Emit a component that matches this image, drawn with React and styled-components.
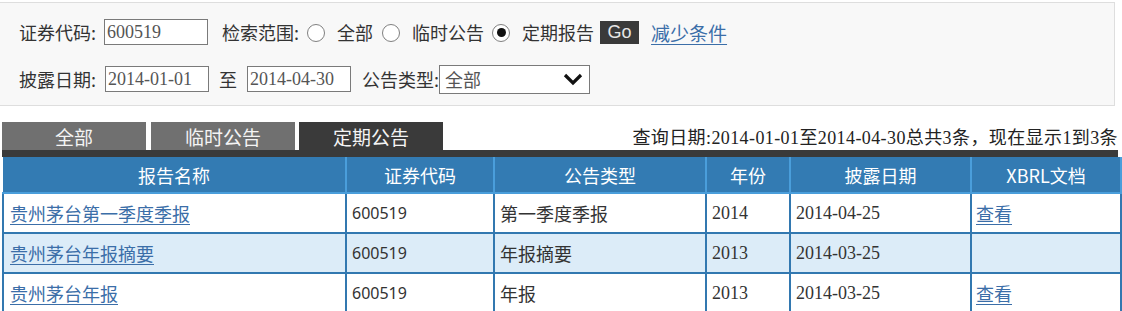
import React from 'react';
import styled, { createGlobalStyle } from 'styled-components';

const GlobalStyle = createGlobalStyle`
  body {
    margin: 0;
    background: #fff;
    font-family: "Noto Sans CJK SC", "Noto Sans", sans-serif;
    color: #333;
  }
`;

const Page = styled.div`
  width: 1122px;
  height: 311px;
  overflow: hidden;
`;

const Filters = styled.div`
  margin: 2px 0 0 -1px;
  width: 1116px;
  height: 104px;
  border: 1px solid #dedede;
  background: #f8f8f8;
  padding: 0 0 0 19px;
  box-sizing: border-box;
  display: flex;
  flex-direction: column;
`;

const FilterRow = styled.div`
  display: flex;
  align-items: center;
  height: ${p => p.$h}px;
  margin-top: ${p => p.$top}px;
`;

const Label = styled.span`
  font-size: 18px;
  line-height: 20px;
  color: #333;
  margin-left: ${p => p.$ml || 0}px;
  margin-right: ${p => p.$mr || 0}px;
`;

const TextInput = styled.div`
  width: ${p => p.$w}px;
  height: 26px;
  box-sizing: border-box;
  border: 1px solid #7a7a7a;
  background: #fff;
  font-family: "Liberation Serif", "Noto Sans CJK SC", serif;
  font-size: 18px;
  color: #555;
  display: flex;
  align-items: center;
  padding-left: 2px;
  margin-left: ${p => p.$ml || 0}px;
`;

const Radio = styled.span`
  width: 18px;
  height: 18px;
  box-sizing: border-box;
  border: 1px solid #808080;
  border-radius: 50%;
  background: #fff;
  display: inline-flex;
  align-items: center;
  justify-content: center;
  margin: 1px 12px 0 ${p => p.$ml || 0}px;
  &::after {
    content: '';
    width: 9px;
    height: 9px;
    border-radius: 50%;
    background: ${p => (p.$checked ? '#111' : 'transparent')};
  }
`;

const GoButton = styled.span`
  width: 39px;
  height: 23px;
  margin: 0 0 0 6px;
  background: #3a3a3a;
  color: #e6e6e6;
  font-family: "Liberation Sans", sans-serif;
  font-size: 18px;
  display: flex;
  align-items: center;
  justify-content: center;
`;

const Link = styled.a`
  color: #3b6ea8;
  text-decoration: underline;
  text-underline-offset: 3px;
  font-size: ${p => p.$size || 18}px;
  margin-left: ${p => p.$ml || 0}px;
  cursor: pointer;
`;

const Select = styled.div`
  width: 151px;
  height: 29px;
  box-sizing: border-box;
  border: 1px solid #7a7a7a;
  background: #fff;
  display: flex;
  align-items: center;
  justify-content: space-between;
  padding: 0 6px 0 5px;
  font-size: 18px;
  color: #555;
`;

const TabBar = styled.div`
  display: flex;
  align-items: flex-end;
  margin: 16px 0 0 2px;
  height: 28px;
`;

const Tab = styled.div`
  width: 144px;
  height: 28px;
  margin-left: ${p => p.$ml || 0}px;
  background: ${p => (p.$active ? '#3a3a3a' : '#707070')};
  color: #f4f4f4;
  font-size: 19px;
  display: flex;
  align-items: center;
  justify-content: center;
`;

const Summary = styled.div`
  margin-left: auto;
  margin-right: 4px;
  align-self: center;
  font-family: "Liberation Serif", "Noto Sans CJK SC", serif;
  font-size: 18px;
  letter-spacing: 0.4px;
  color: #222;
`;

const DarkBar = styled.div`
  margin-left: 2px;
  width: 1116px;
  height: 7px;
  background: #3a3a3a;
`;

const Table = styled.table`
  margin-left: 2px;
  width: 1118px;
  border-collapse: collapse;
  table-layout: fixed;
`;

const Th = styled.th`
  height: 35px;
  padding: 0;
  background: #337bb3;
  color: #fff;
  font-weight: normal;
  font-size: 18px;
  border-left: 2px solid #4a9edb;
  border-bottom: 2px solid #4a9edb;
  &:first-child {
    border-left: none;
  }
  &:last-child {
    border-right: 2px solid #4a9edb;
  }
`;

const Tr = styled.tr`
  background: ${p => (p.$alt ? '#dcecf8' : '#fff')};
`;

const Td = styled.td`
  height: 38px;
  padding: 0 0 0 ${p => p.$pl || 5}px;
  border: 2px solid #3278b0;
  border-top: none;
  font-size: 18px;
  color: #333;
  font-family: ${p =>
    p.$kind === 'sans'
      ? '"Noto Sans", "Noto Sans CJK SC", sans-serif'
      : p.$kind === 'serif'
      ? '"Liberation Serif", "Noto Sans CJK SC", serif'
      : '"Noto Sans CJK SC", sans-serif'};
  ${p => p.$kind === 'sans' && 'font-size: 16px;'}
`;

const Chevron = () => (
  <svg width="20" height="14" viewBox="0 0 20 14">
    <path d="M2 3 L10 11 L18 3" fill="none" stroke="#111" strokeWidth="3.2" />
  </svg>
);

const columns = [
  { title: '报告名称', w: 343 },
  { title: '证券代码', w: 148 },
  { title: '公告类型', w: 212 },
  { title: '年份', w: 84 },
  { title: '披露日期', w: 181 },
  { title: 'XBRL文档', w: 150 },
];

const rows = [
  { name: '贵州茅台第一季度季报', code: '600519', type: '第一季度季报', year: '2014', date: '2014-04-25', xbrl: true },
  { name: '贵州茅台年报摘要', code: '600519', type: '年报摘要', year: '2013', date: '2014-03-25', xbrl: false },
  { name: '贵州茅台年报', code: '600519', type: '年报', year: '2013', date: '2014-03-25', xbrl: true },
];

export default function App() {
  return (
    <Page>
      <GlobalStyle />
      <Filters>
        <FilterRow $h={28} $top={15}>
          <Label $mr={8}>证券代码:</Label>
          <TextInput $w={104}>600519</TextInput>
          <Label $ml={14}>检索范围:</Label>
          <Radio $ml={8} />
          <Label>全部</Label>
          <Radio $ml={9} />
          <Label>临时公告</Label>
          <Radio $ml={8} $checked />
          <Label>定期报告</Label>
          <GoButton>Go</GoButton>
          <Link $size={19} $ml={12}>减少条件</Link>
        </FilterRow>
        <FilterRow $h={30} $top={18}>
          <Label $mr={9}>披露日期:</Label>
          <TextInput $w={104}>2014-01-01</TextInput>
          <Label $ml={10} $mr={10}>至</Label>
          <TextInput $w={104}>2014-04-30</TextInput>
          <Label $ml={11}>公告类型:</Label>
          <Select>
            全部
            <Chevron />
          </Select>
        </FilterRow>
      </Filters>

      <TabBar>
        <Tab>全部</Tab>
        <Tab $ml={5}>临时公告</Tab>
        <Tab $ml={4} $active>定期公告</Tab>
        <Summary>查询日期:2014-01-01至2014-04-30总共3条，现在显示1到3条</Summary>
      </TabBar>
      <DarkBar />

      <Table>
        <colgroup>
          {columns.map(c => (
            <col key={c.title} style={{ width: c.w }} />
          ))}
        </colgroup>
        <thead>
          <tr>
            {columns.map(c => (
              <Th key={c.title}>{c.title}</Th>
            ))}
          </tr>
        </thead>
        <tbody>
          {rows.map((r, i) => (
            <Tr key={r.name} $alt={i % 2 === 1}>
              <Td $pl={6}>
                <Link>{r.name}</Link>
              </Td>
              <Td $kind="sans">{r.code}</Td>
              <Td>{r.type}</Td>
              <Td $kind="serif">{r.year}</Td>
              <Td $kind="serif">{r.date}</Td>
              <Td $pl={4}>{r.xbrl && <Link>查看</Link>}</Td>
            </Tr>
          ))}
        </tbody>
      </Table>
    </Page>
  );
}
